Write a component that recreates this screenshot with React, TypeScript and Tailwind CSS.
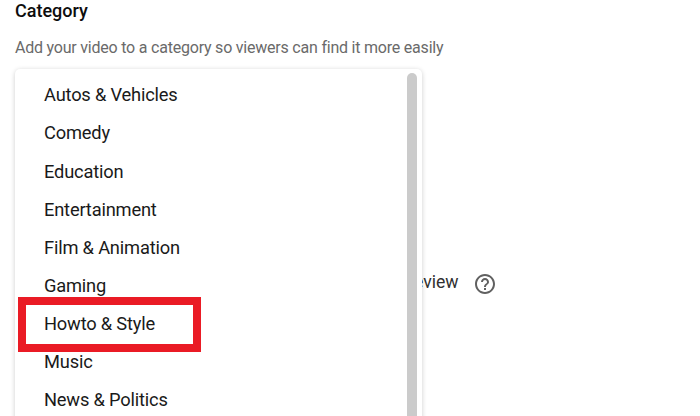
const categories = [
  "Autos & Vehicles",
  "Comedy",
  "Education",
  "Entertainment",
  "Film & Animation",
  "Gaming",
  "Howto & Style",
  "Music",
  "News & Politics",
];

function CategoryMenu() {
  return (
    <div className="absolute left-[15px] top-[69px] flex h-[400px] w-[407px] justify-between rounded-[5px] bg-white pl-[29px] pr-[5px] shadow-[0_1px_5px_rgba(0,0,0,0.2)]">
      <ul className="pt-[6.9px] text-[18.3px] tracking-[-0.19px] text-[#1a1a1a]">
        {categories.map((name) => (
          <li key={name} className="flex h-[38.15px] items-center whitespace-nowrap">
            {name}
          </li>
        ))}
      </ul>
      <div className="mt-1 w-[10px] rounded-full bg-[#cbcbcb]" />
    </div>
  );
}

export default function App() {
  return (
    <main className="relative h-[416px] w-[700px] overflow-hidden bg-white font-['Roboto','Liberation_Sans',sans-serif]">
      <h1 className="pl-[15px] text-[18px] leading-[22px] font-medium text-[#0d0d0d]">Category</h1>
      <p className="mt-4 pl-[15px] text-[16px] leading-5 tracking-[-0.215px] whitespace-nowrap text-[#6a6a6a]">
        Add your video to a category so viewers can find it more easily
      </p>
      <div className="mt-[211px] flex items-center gap-[14px] pl-[414px]">
        <span className="-mt-[2px] text-[17.6px] leading-6 text-[#303030]">eview</span>
        <svg viewBox="0 0 24 24" className="mt-[3px] size-[24px] fill-[#606060]">
          <path d="M11 18h2v-2h-2v2zm1-16C6.48 2 2 6.48 2 12s4.48 10 10 10 10-4.48 10-10S17.52 2 12 2zm0 18c-4.41 0-8-3.59-8-8s3.59-8 8-8 8 3.59 8 8-3.59 8-8 8zm0-14c-2.21 0-4 1.79-4 4h2c0-1.1.9-2 2-2s2 .9 2 2c0 2-3 1.75-3 5h2c0-2.25 3-2.5 3-5 0-2.21-1.79-4-4-4z" />
        </svg>
      </div>
      <CategoryMenu />
      <div className="absolute left-[18px] top-[297px] h-[55px] w-[183px] border-8 border-[#ea1b25]" />
    </main>
  );
}
